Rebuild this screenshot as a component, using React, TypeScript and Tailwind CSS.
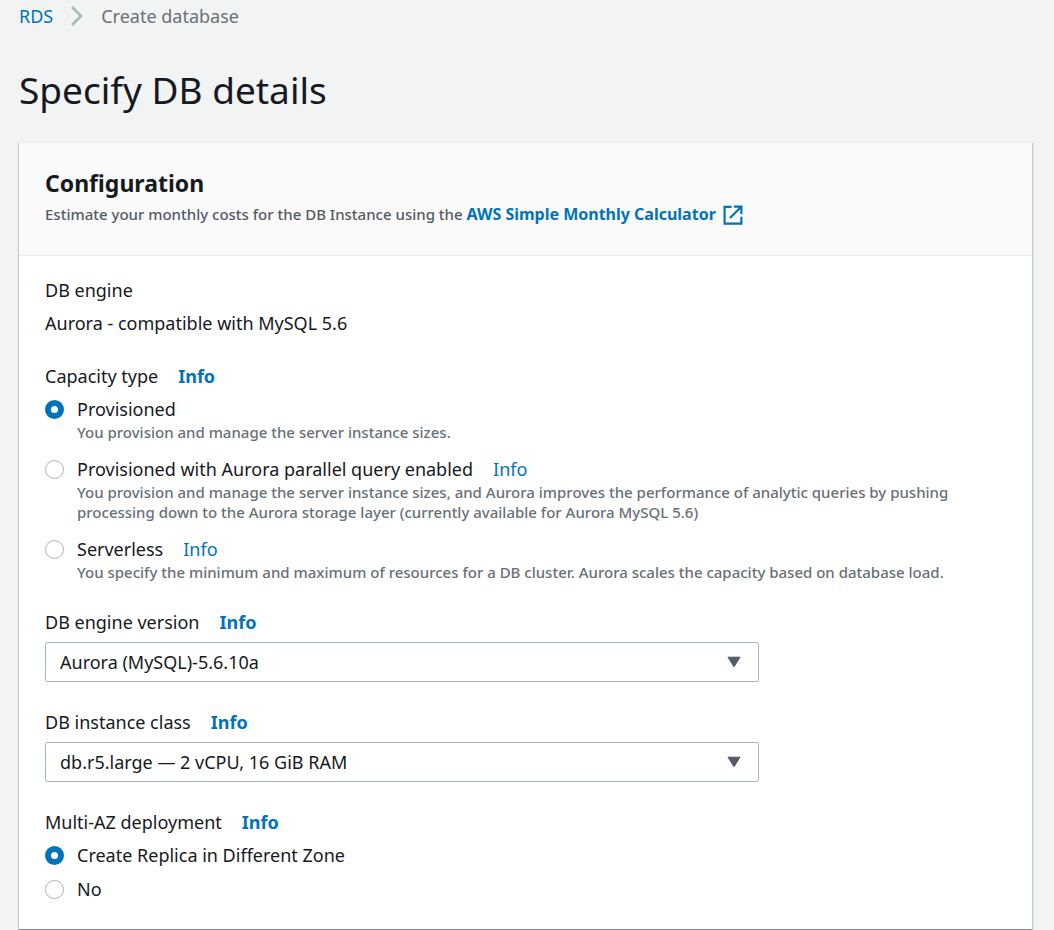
import { useId, useState } from "react";
import type { ReactNode } from "react";

function InfoLink({ bold = false }: { bold?: boolean }) {
  return (
    <a href="#info" className={bold ? "font-bold text-[#0073bb]" : "text-[#0073bb]"}>
      Info
    </a>
  );
}

type Option = { value: string; label: string; description?: string; info?: boolean };

function RadioOption({
  option,
  name,
  checked,
  onChange,
}: {
  option: Option;
  name: string;
  checked: boolean;
  onChange: () => void;
}) {
  const id = useId();
  return (
    <div className="flex gap-[13px]">
      <input
        id={id}
        type="radio"
        name={name}
        checked={checked}
        onChange={onChange}
        className="mt-1 size-[19px] shrink-0 appearance-none rounded-full border border-[#aab7b8] bg-white checked:border-[6px] checked:border-[#0073bb]"
      />
      <div>
        <div className="flex gap-5 leading-[26px]">
          <label htmlFor={id}>{option.label}</label>
          {option.info && <InfoLink />}
        </div>
        {option.description && (
          <p className="text-[15px] leading-5 font-medium text-[#687078]">{option.description}</p>
        )}
      </div>
    </div>
  );
}

function RadioField({
  legend,
  name,
  options,
  gap,
}: {
  legend: string;
  name: string;
  options: Option[];
  gap: string;
}) {
  const [value, setValue] = useState(options[0].value);
  const id = useId();
  return (
    <div role="radiogroup" aria-labelledby={id} className="flex flex-col gap-[7px]">
      <div className="flex gap-5 leading-[26px]">
        <span id={id}>{legend}</span>
        <InfoLink bold />
      </div>
      <div className={`flex flex-col ${gap}`}>
        {options.map((option) => (
          <RadioOption
            key={option.value}
            option={option}
            name={name}
            checked={value === option.value}
            onChange={() => setValue(option.value)}
          />
        ))}
      </div>
    </div>
  );
}

function SelectField({ label, children }: { label: string; children: ReactNode }) {
  const id = useId();
  return (
    <div className="flex flex-col gap-[7px]">
      <div className="flex gap-5 leading-[26px]">
        <label htmlFor={id}>{label}</label>
        <InfoLink bold />
      </div>
      <div className="grid max-w-[714px] items-center">
        <select
          id={id}
          className="col-start-1 row-start-1 h-10 w-full appearance-none rounded-xs border border-[#aab7b8] bg-white pr-12 pl-[14px]"
        >
          {children}
        </select>
        <svg
          viewBox="0 0 14 12"
          className="pointer-events-none col-start-1 row-start-1 mr-[18px] h-3 w-[14px] justify-self-end"
          aria-hidden="true"
        >
          <path d="M1 1.2h12L7 10.8z" fill="#545b64" stroke="#545b64" strokeWidth="1" strokeLinejoin="round" />
        </svg>
      </div>
    </div>
  );
}

const capacityOptions: Option[] = [
  {
    value: "provisioned",
    label: "Provisioned",
    description: "You provision and manage the server instance sizes.",
  },
  {
    value: "parallel",
    label: "Provisioned with Aurora parallel query enabled",
    description:
      "You provision and manage the server instance sizes, and Aurora improves the performance of analytic queries by pushing processing down to the Aurora storage layer (currently available for Aurora MySQL 5.6)",
    info: true,
  },
  {
    value: "serverless",
    label: "Serverless",
    description:
      "You specify the minimum and maximum of resources for a DB cluster. Aurora scales the capacity based on database load.",
    info: true,
  },
];

const zoneOptions: Option[] = [
  { value: "replica", label: "Create Replica in Different Zone" },
  { value: "no", label: "No" },
];

export default function App() {
  return (
    <div className="min-h-screen bg-[#f2f3f3] pr-[22px] pl-[19px] font-['Noto_Sans',sans-serif] text-[18px] text-[#16191f]">
      <nav aria-label="Breadcrumb" className="flex h-8 items-center gap-[18px]">
        <a href="#rds" className="text-[#0073bb]">
          RDS
        </a>
        <svg viewBox="0 0 12 20" className="h-5 w-3" aria-hidden="true">
          <path d="M1 1l9 9-9 9" fill="none" stroke="#aab7b8" strokeWidth="2.6" />
        </svg>
        <span className="text-[#687078]">Create database</span>
      </nav>

      <h1 className="pt-[34px] pb-7 text-[37px] leading-12">Specify DB details</h1>

      <main className="bg-white shadow-[0_1px_1px_0_rgba(0,28,36,0.3),1px_1px_1px_0_rgba(0,28,36,0.15),-1px_1px_1px_0_rgba(0,28,36,0.15)]">
        <header className="border-y border-[#eaeded] bg-[#fafafa] px-[26px] pt-6 pb-[25px]">
          <h2 className="text-[23px] leading-8 font-bold">Configuration</h2>
          <p className="flex flex-wrap items-center text-[15px] leading-[31px] font-medium text-[#545b64]">
            Estimate your monthly costs for the DB Instance using the&nbsp;
            <a href="#calculator" className="flex items-center gap-[7px] text-base leading-[31px] font-bold text-[#0073bb]">
              AWS Simple Monthly Calculator
              <svg
                viewBox="0 0 20 20"
                className="size-5"
                fill="none"
                stroke="currentColor"
                strokeWidth="2.2"
                aria-hidden="true"
              >
                <path d="M8.5 1.8H1.6v16.8h16.8v-6.8M11 1.6h7.4V9M18 2L7 13" />
              </svg>
            </a>
          </p>
        </header>

        <form className="flex flex-col gap-[27px] px-[26px] pt-[21px] pb-[27px]">
          <div className="flex flex-col gap-[7px] leading-[26px]">
            <div>DB engine</div>
            <div>Aurora - compatible with MySQL 5.6</div>
          </div>
          <RadioField legend="Capacity type" name="capacity" options={capacityOptions} gap="gap-[14px]" />
          <SelectField label="DB engine version">
            <option>Aurora (MySQL)-5.6.10a</option>
          </SelectField>
          <SelectField label="DB instance class">
            <option>db.r5.large — 2 vCPU, 16 GiB RAM</option>
          </SelectField>
          <RadioField legend="Multi-AZ deployment" name="multi-az" options={zoneOptions} gap="gap-2" />
        </form>
      </main>
    </div>
  );
}
